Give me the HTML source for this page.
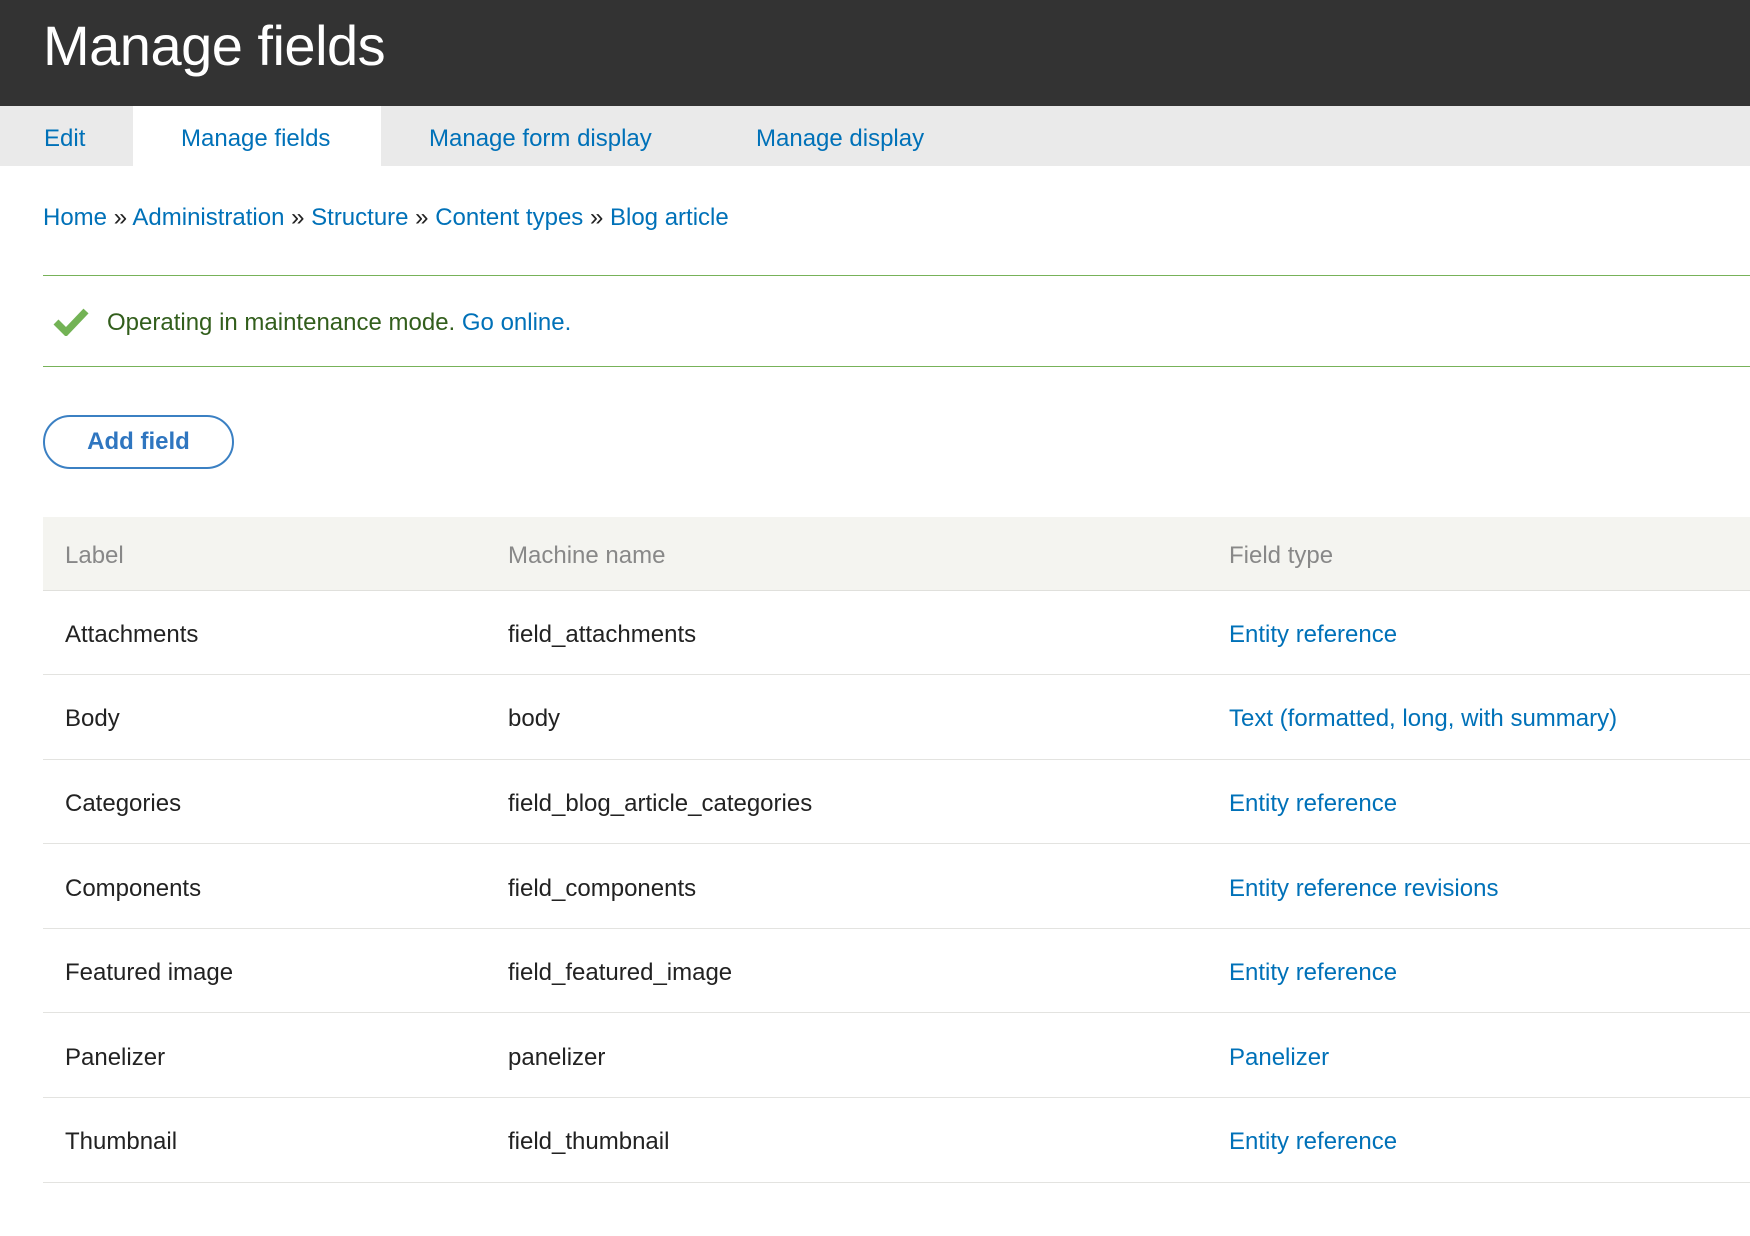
<!DOCTYPE html>
<html><head><meta charset="utf-8"><style>
*{margin:0;padding:0;box-sizing:border-box}
body{width:1750px;height:1236px;background:#fff;font-family:"Liberation Sans",sans-serif;position:relative;overflow:hidden;color:#222}
.hdr{position:absolute;left:0;top:0;width:1750px;height:106px;background:#333}
.hdr h1{position:absolute;left:43px;top:13px;font-weight:normal;font-size:56px;color:#fff;letter-spacing:-0.5px}
.tabs{position:absolute;left:0;top:106px;width:1750px;height:60px;background:#eaeaea}
.tab{position:absolute;top:0;height:60px;line-height:66px;font-size:24px;color:#0071b8}
.act{background:#fff}
a{color:#0071b8;text-decoration:none}
.bc{position:absolute;left:43px;top:204px;font-size:24px;color:#222}
.msg{position:absolute;left:43px;top:275px;width:1707px;height:92px;border-top:1px solid #77b259;border-bottom:1px solid #77b259}
.msg span{position:absolute;left:64px;top:33px;font-size:24px;color:#325e1c}
.btn{position:absolute;left:43px;top:415px;width:191px;height:54px;border:2px solid #3b80c3;border-radius:27px;text-align:center;line-height:50px;font-weight:bold;font-size:24px;color:#2f76c0}
table{position:absolute;left:43px;top:517px;width:1707px;border-collapse:collapse;font-size:24px}
th{background:#f4f4f0;color:#888;font-weight:normal;text-align:left;height:73px;border-bottom:1px solid #e0e0dc;padding-top:5px}
td{height:84.6px;border-bottom:1px solid #e3e3e0;padding-top:5px}
th,td{padding-left:22px}
</style></head><body>
<div class="hdr"><h1>Manage fields</h1></div>
<div class="tabs">
<div class="tab" style="left:44px">Edit</div>
<div class="tab act" style="left:133px;width:248px;padding-left:48px">Manage fields</div>
<div class="tab" style="left:429px">Manage form display</div>
<div class="tab" style="left:756px">Manage display</div>
</div>
<div class="bc"><a>Home</a> » <a>Administration</a> » <a>Structure</a> » <a>Content types</a> » <a>Blog article</a></div>
<div class="msg">
<svg style="position:absolute;left:10px;top:32px" width="36" height="28" viewBox="0 0 36 28"><path d="M3 14 L13 24 L33 3" fill="none" stroke="#73b355" stroke-width="7"/></svg>
<span>Operating in maintenance mode. <a>Go online.</a></span></div>
<div class="btn">Add field</div>
<table>
<tr><th style="width:443px">Label</th><th style="width:721px">Machine name</th><th>Field type</th></tr>
<tr><td>Attachments</td><td>field_attachments</td><td><a>Entity reference</a></td></tr>
<tr><td>Body</td><td>body</td><td><a>Text (formatted, long, with summary)</a></td></tr>
<tr><td>Categories</td><td>field_blog_article_categories</td><td><a>Entity reference</a></td></tr>
<tr><td>Components</td><td>field_components</td><td><a>Entity reference revisions</a></td></tr>
<tr><td>Featured image</td><td>field_featured_image</td><td><a>Entity reference</a></td></tr>
<tr><td>Panelizer</td><td>panelizer</td><td><a>Panelizer</a></td></tr>
<tr><td>Thumbnail</td><td>field_thumbnail</td><td><a>Entity reference</a></td></tr>
</table>
</body></html>
